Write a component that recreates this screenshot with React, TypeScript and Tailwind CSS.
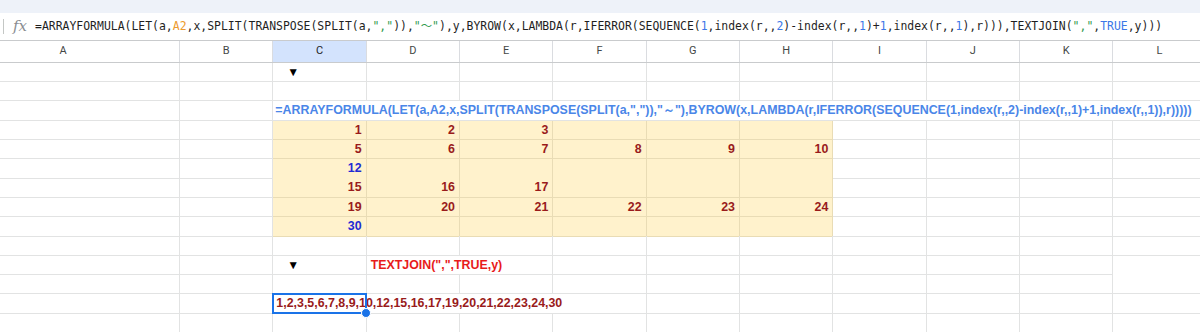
import type { ReactNode } from 'react';

const COLS = ['A', 'B', 'C', 'D', 'E', 'F', 'G', 'H', 'I', 'J', 'K', 'L'];

const ORANGE = 'text-[#ec9a2e]';
const GREEN = 'text-[#2f9a4e]';
const BLUE = 'text-[#3b78e7]';

// formula bar tokens
const FORMULA: [string, string?][] = [
  ['=ARRAYFORMULA(LET(a,'],
  ['A2', ORANGE],
  [',x,SPLIT(TRANSPOSE(SPLIT(a,'],
  ['","', GREEN],
  [')),'],
  ['"～"', GREEN],
  ['),y,BYROW(x,LAMBDA(r,IFERROR(SEQUENCE('],
  ['1', BLUE],
  [',index(r,,'],
  ['2', BLUE],
  [')-index(r,,'],
  ['1', BLUE],
  [')+'],
  ['1', BLUE],
  [',index(r,,'],
  ['1', BLUE],
  ['),r))),TEXTJOIN('],
  ['","', GREEN],
  [','],
  ['TRUE', BLUE],
  [',y)))'],
];

// rows 4-9 of the yellow block, columns C..H
const BLOCK: (number | null)[][] = [
  [1, 2, 3, null, null, null],
  [5, 6, 7, 8, 9, 10],
  [12, null, null, null, null, null],
  [15, 16, 17, null, null, null],
  [19, 20, 21, 22, 23, 24],
  [30, null, null, null, null, null],
];

const SPAN: Record<number, string> = {
  1: '',
  2: 'col-span-2',
  4: 'col-span-4',
  6: 'col-span-6',
  10: 'col-span-10',
};

function Row({ children }: { children: ReactNode }) {
  return (
    <div className="grid h-[19.3px] grid-cols-[180px_repeat(11,93.33px)]">{children}</div>
  );
}

function Cell({
  span = 1,
  className = '',
  children,
}: {
  span?: number;
  className?: string;
  children?: ReactNode;
}) {
  return (
    <div
      className={`relative flex items-center border-r border-b border-[#e2e3e3] font-['Liberation_Sans',Arial,sans-serif] text-[12.4px] font-bold whitespace-nowrap ${SPAN[span]} ${className}`}
    >
      {children}
    </div>
  );
}

function Empty({ n }: { n: number }) {
  return (
    <>
      {Array.from({ length: n }).map((_, i) => (
        <Cell key={i} />
      ))}
    </>
  );
}

export default function App() {
  return (
    <div className="h-[332px] w-[1200px] overflow-hidden bg-white">
      <div className="h-[13px] bg-[#eef2f9]" />
      <div className="flex h-[27px] items-center">
        <div className="ml-[3px] h-[15px] w-px bg-[#c4c7c5]" />
        <span className="ml-[9px] font-['DejaVu_Serif',serif] text-[15px] italic text-[#8a8d91]">
          fx
        </span>
        <div className="ml-[8px] font-['DejaVu_Sans_Mono','Noto_Sans_CJK_JP',monospace] text-[11.45px] whitespace-nowrap text-[#1f1f1f]">
          {FORMULA.map(([t, c], i) => (
            <span key={i} className={c}>
              {t}
            </span>
          ))}
        </div>
      </div>

      <div className="grid h-[22.7px] grid-cols-[180px_repeat(11,93.33px)] border-y border-[#c9cbcd] font-['Roboto',sans-serif] text-[11px] text-[#444746]">
        {COLS.map((c, i) => (
          <div
            key={c}
            className={`flex items-center border-r border-[#dadce0] ${
              i === 0 ? 'justify-start' : 'justify-center'
            } ${i === 2 ? 'bg-[#d3e3fd] text-[#1f1f1f]' : ''}`}
          >
            {i === 0 ? <span className="w-[126px] text-center">{c}</span> : c}
          </div>
        ))}
      </div>

      <Row>
        <Empty n={2} />
        <Cell className="pl-[14px] font-['DejaVu_Sans',sans-serif] text-[12px] text-black">▼</Cell>
        <Empty n={9} />
      </Row>
      <Row>
        <Empty n={12} />
      </Row>
      <Row>
        <Empty n={2} />
        <Cell span={10} className="pl-[2px] tracking-[0.02px] text-[#4a86e8]">
          {'=ARRAYFORMULA(LET(a,A2,x,SPLIT(TRANSPOSE(SPLIT(a,",")),"～"),BYROW(x,LAMBDA(r,IFERROR(SEQUENCE(1,index(r,,2)-index(r,,1)+1,index(r,,1)),r)))))'}
        </Cell>
      </Row>
      {BLOCK.map((row, ri) => (
        <Row key={ri}>
          <Empty n={2} />
          {row.map((v, ci) => (
            <Cell
              key={ci}
              className={`justify-end border-[#e9dcb5] bg-[#fff2cc] pr-[4px] ${
                v === 12 || v === 30 ? 'text-[#1f2bd4]' : 'text-[#991b1b]'
              }`}
            >
              {v}
            </Cell>
          ))}
          <Empty n={4} />
        </Row>
      ))}
      <Row>
        <Empty n={12} />
      </Row>
      <Row>
        <Empty n={2} />
        <Cell className="pl-[14px] font-['DejaVu_Sans',sans-serif] text-[12px] text-black">▼</Cell>
        <Cell span={2} className="pl-[4px] text-[#e81b1b]">
          {'TEXTJOIN(",",TRUE,y)'}
        </Cell>
        <Empty n={6} />
      </Row>
      <Row>
        <Empty n={12} />
      </Row>
      <Row>
        <Empty n={2} />
        <Cell span={4} className="z-10 pl-[3px] text-[#991b1b]">
          1,2,3,5,6,7,8,9,10,12,15,16,17,19,20,21,22,23,24,30
          <div className="absolute top-[-1px] left-[-1px] h-[20.3px] w-[94.5px] border-2 border-[#1a73e8]" />
          <div className="absolute top-[14px] left-[88px] h-[10px] w-[10px] rounded-full border border-white bg-[#1a73e8]" />
        </Cell>
        <Empty n={6} />
      </Row>
      <Row>
        <Empty n={12} />
      </Row>
    </div>
  );
}
